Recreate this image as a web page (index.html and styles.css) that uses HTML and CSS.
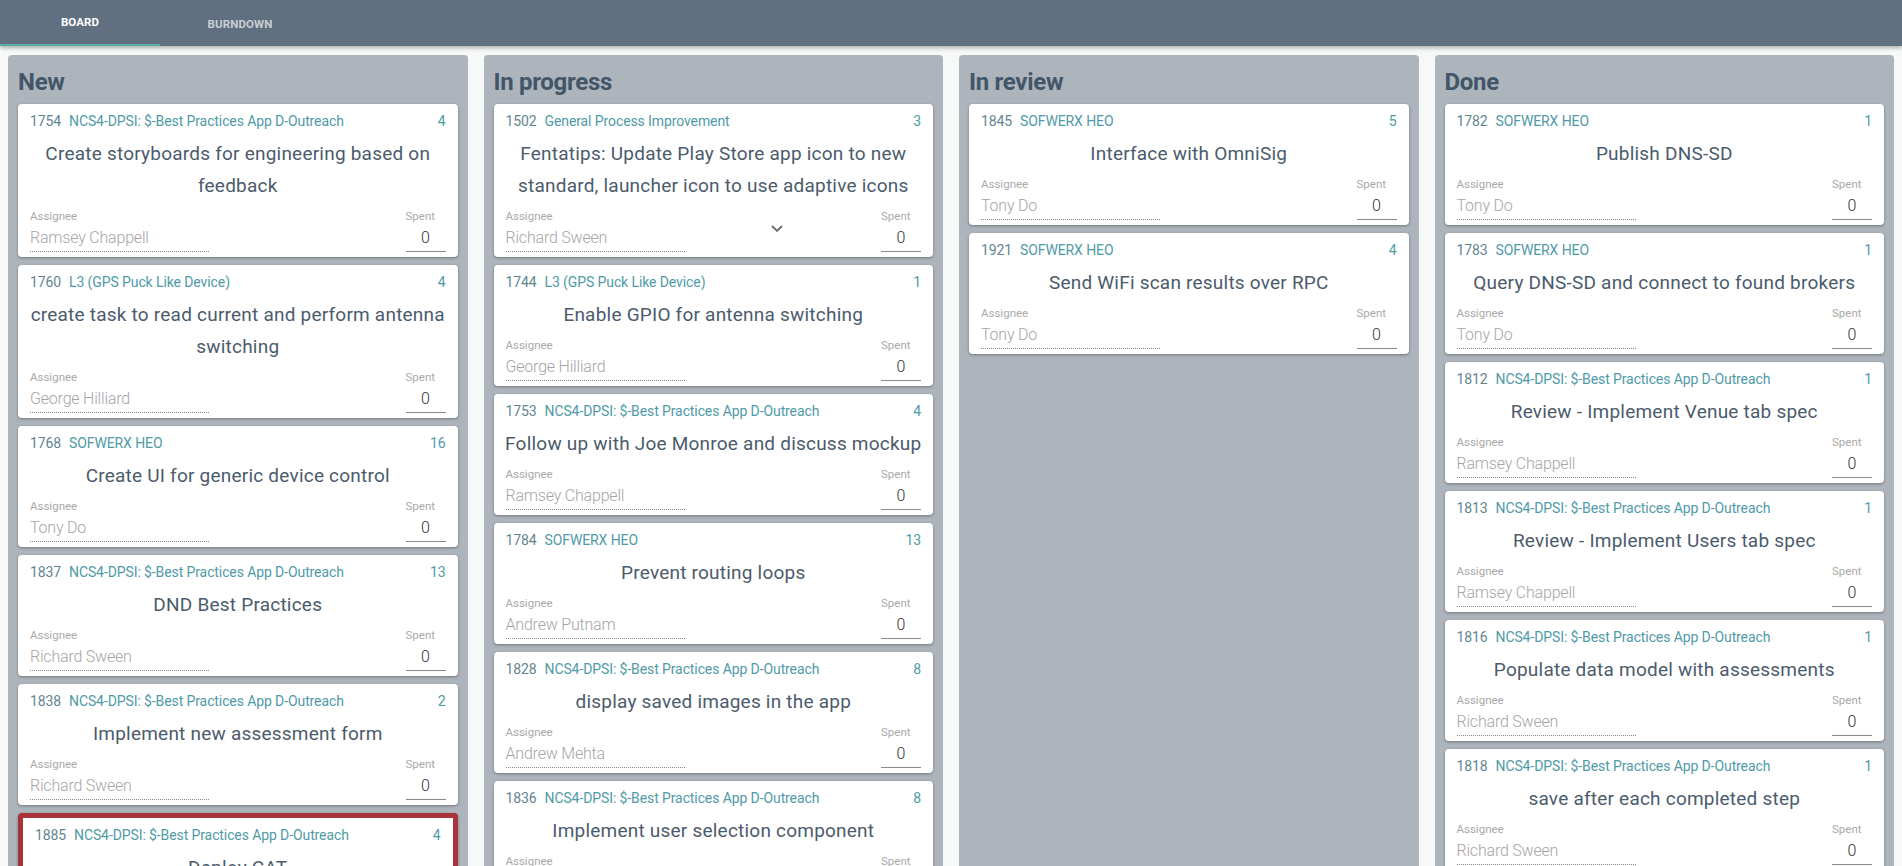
FILE: index.html
```html
<!DOCTYPE html>
<html>
<head>
<meta charset="utf-8">
<link rel="stylesheet" href="styles.css">
</head>
<body>
<header class="topbar">
  <div class="tab active">BOARD</div>
  <div class="tab">BURNDOWN</div>
</header>
<main class="board">
  <section class="column">
    <h2 class="col-title">New</h2>
    <div class="card">
      <div class="meta"><span class="id">1754</span><span class="proj">NCS4-DPSI: $-Best Practices App D-Outreach</span><span class="pts">4</span></div>
      <div class="title">Create storyboards for engineering based on feedback</div>
      <div class="foot"><div class="assignee"><div class="lbl">Assignee</div><div class="val">Ramsey Chappell</div></div><div class="spent"><div class="lbl">Spent</div><div class="val">0</div></div></div>
    </div>
    <div class="card">
      <div class="meta"><span class="id">1760</span><span class="proj">L3 (GPS Puck Like Device)</span><span class="pts">4</span></div>
      <div class="title">create task to read current and perform antenna switching</div>
      <div class="foot"><div class="assignee"><div class="lbl">Assignee</div><div class="val">George Hilliard</div></div><div class="spent"><div class="lbl">Spent</div><div class="val">0</div></div></div>
    </div>
    <div class="card">
      <div class="meta"><span class="id">1768</span><span class="proj">SOFWERX HEO</span><span class="pts">16</span></div>
      <div class="title">Create UI for generic device control</div>
      <div class="foot"><div class="assignee"><div class="lbl">Assignee</div><div class="val">Tony Do</div></div><div class="spent"><div class="lbl">Spent</div><div class="val">0</div></div></div>
    </div>
    <div class="card">
      <div class="meta"><span class="id">1837</span><span class="proj">NCS4-DPSI: $-Best Practices App D-Outreach</span><span class="pts">13</span></div>
      <div class="title">DND Best Practices</div>
      <div class="foot"><div class="assignee"><div class="lbl">Assignee</div><div class="val">Richard Sween</div></div><div class="spent"><div class="lbl">Spent</div><div class="val">0</div></div></div>
    </div>
    <div class="card">
      <div class="meta"><span class="id">1838</span><span class="proj">NCS4-DPSI: $-Best Practices App D-Outreach</span><span class="pts">2</span></div>
      <div class="title">Implement new assessment form</div>
      <div class="foot"><div class="assignee"><div class="lbl">Assignee</div><div class="val">Richard Sween</div></div><div class="spent"><div class="lbl">Spent</div><div class="val">0</div></div></div>
    </div>
    <div class="card flagged">
      <div class="meta"><span class="id">1885</span><span class="proj">NCS4-DPSI: $-Best Practices App D-Outreach</span><span class="pts">4</span></div>
      <div class="title">Deploy CAT</div>
      <div class="foot"><div class="assignee"><div class="lbl">Assignee</div><div class="val">Richard Sween</div></div><div class="spent"><div class="lbl">Spent</div><div class="val">0</div></div></div>
    </div>
  </section>

  <section class="column">
    <h2 class="col-title">In progress</h2>
    <div class="card">
      <div class="meta"><span class="id">1502</span><span class="proj">General Process Improvement</span><span class="pts">3</span></div>
      <div class="title">Fentatips: Update Play Store app icon to new standard, launcher icon to use adaptive icons</div>
      <div class="foot"><div class="assignee"><div class="lbl">Assignee</div><div class="val">Richard Sween</div></div>
        <svg class="chev" width="12" height="7" viewBox="0 0 12 7"><path d="M1 1 L6 5.8 L11 1" fill="none" stroke="#666" stroke-width="1.8"/></svg>
        <div class="spent"><div class="lbl">Spent</div><div class="val">0</div></div></div>
    </div>
    <div class="card">
      <div class="meta"><span class="id">1744</span><span class="proj">L3 (GPS Puck Like Device)</span><span class="pts">1</span></div>
      <div class="title">Enable GPIO for antenna switching</div>
      <div class="foot"><div class="assignee"><div class="lbl">Assignee</div><div class="val">George Hilliard</div></div><div class="spent"><div class="lbl">Spent</div><div class="val">0</div></div></div>
    </div>
    <div class="card">
      <div class="meta"><span class="id">1753</span><span class="proj">NCS4-DPSI: $-Best Practices App D-Outreach</span><span class="pts">4</span></div>
      <div class="title">Follow up with Joe Monroe and discuss mockup</div>
      <div class="foot"><div class="assignee"><div class="lbl">Assignee</div><div class="val">Ramsey Chappell</div></div><div class="spent"><div class="lbl">Spent</div><div class="val">0</div></div></div>
    </div>
    <div class="card">
      <div class="meta"><span class="id">1784</span><span class="proj">SOFWERX HEO</span><span class="pts">13</span></div>
      <div class="title">Prevent routing loops</div>
      <div class="foot"><div class="assignee"><div class="lbl">Assignee</div><div class="val">Andrew Putnam</div></div><div class="spent"><div class="lbl">Spent</div><div class="val">0</div></div></div>
    </div>
    <div class="card">
      <div class="meta"><span class="id">1828</span><span class="proj">NCS4-DPSI: $-Best Practices App D-Outreach</span><span class="pts">8</span></div>
      <div class="title">display saved images in the app</div>
      <div class="foot"><div class="assignee"><div class="lbl">Assignee</div><div class="val">Andrew Mehta</div></div><div class="spent"><div class="lbl">Spent</div><div class="val">0</div></div></div>
    </div>
    <div class="card">
      <div class="meta"><span class="id">1836</span><span class="proj">NCS4-DPSI: $-Best Practices App D-Outreach</span><span class="pts">8</span></div>
      <div class="title">Implement user selection component</div>
      <div class="foot"><div class="assignee"><div class="lbl">Assignee</div><div class="val">Andrew Mehta</div></div><div class="spent"><div class="lbl">Spent</div><div class="val">0</div></div></div>
    </div>
  </section>

  <section class="column">
    <h2 class="col-title">In review</h2>
    <div class="card">
      <div class="meta"><span class="id">1845</span><span class="proj">SOFWERX HEO</span><span class="pts">5</span></div>
      <div class="title">Interface with OmniSig</div>
      <div class="foot"><div class="assignee"><div class="lbl">Assignee</div><div class="val">Tony Do</div></div><div class="spent"><div class="lbl">Spent</div><div class="val">0</div></div></div>
    </div>
    <div class="card">
      <div class="meta"><span class="id">1921</span><span class="proj">SOFWERX HEO</span><span class="pts">4</span></div>
      <div class="title">Send WiFi scan results over RPC</div>
      <div class="foot"><div class="assignee"><div class="lbl">Assignee</div><div class="val">Tony Do</div></div><div class="spent"><div class="lbl">Spent</div><div class="val">0</div></div></div>
    </div>
  </section>

  <section class="column">
    <h2 class="col-title">Done</h2>
    <div class="card">
      <div class="meta"><span class="id">1782</span><span class="proj">SOFWERX HEO</span><span class="pts">1</span></div>
      <div class="title">Publish DNS-SD</div>
      <div class="foot"><div class="assignee"><div class="lbl">Assignee</div><div class="val">Tony Do</div></div><div class="spent"><div class="lbl">Spent</div><div class="val">0</div></div></div>
    </div>
    <div class="card">
      <div class="meta"><span class="id">1783</span><span class="proj">SOFWERX HEO</span><span class="pts">1</span></div>
      <div class="title">Query DNS-SD and connect to found brokers</div>
      <div class="foot"><div class="assignee"><div class="lbl">Assignee</div><div class="val">Tony Do</div></div><div class="spent"><div class="lbl">Spent</div><div class="val">0</div></div></div>
    </div>
    <div class="card">
      <div class="meta"><span class="id">1812</span><span class="proj">NCS4-DPSI: $-Best Practices App D-Outreach</span><span class="pts">1</span></div>
      <div class="title">Review - Implement Venue tab spec</div>
      <div class="foot"><div class="assignee"><div class="lbl">Assignee</div><div class="val">Ramsey Chappell</div></div><div class="spent"><div class="lbl">Spent</div><div class="val">0</div></div></div>
    </div>
    <div class="card">
      <div class="meta"><span class="id">1813</span><span class="proj">NCS4-DPSI: $-Best Practices App D-Outreach</span><span class="pts">1</span></div>
      <div class="title">Review - Implement Users tab spec</div>
      <div class="foot"><div class="assignee"><div class="lbl">Assignee</div><div class="val">Ramsey Chappell</div></div><div class="spent"><div class="lbl">Spent</div><div class="val">0</div></div></div>
    </div>
    <div class="card">
      <div class="meta"><span class="id">1816</span><span class="proj">NCS4-DPSI: $-Best Practices App D-Outreach</span><span class="pts">1</span></div>
      <div class="title">Populate data model with assessments</div>
      <div class="foot"><div class="assignee"><div class="lbl">Assignee</div><div class="val">Richard Sween</div></div><div class="spent"><div class="lbl">Spent</div><div class="val">0</div></div></div>
    </div>
    <div class="card">
      <div class="meta"><span class="id">1818</span><span class="proj">NCS4-DPSI: $-Best Practices App D-Outreach</span><span class="pts">1</span></div>
      <div class="title">save after each completed step</div>
      <div class="foot"><div class="assignee"><div class="lbl">Assignee</div><div class="val">Richard Sween</div></div><div class="spent"><div class="lbl">Spent</div><div class="val">0</div></div></div>
    </div>
  </section>
</main>
</body>
</html>
```

FILE: styles.css
```css
* { box-sizing: border-box; }
html, body { margin: 0; padding: 0; }
body {
  background: #f7f8f8;
  font-family: Roboto, "Liberation Sans", sans-serif;
  overflow: hidden;
  height: 866px;
}
.topbar {
  height: 46px;
  background: #607080;
  display: flex;
  box-shadow: 0 2px 4px rgba(0,0,0,0.3);
  position: relative;
  z-index: 2;
}
.tab {
  width: 160px;
  display: flex;
  align-items: center;
  justify-content: center;
  font-size: 11.5px;
  font-weight: 700;
  color: #c9cfd5;
  letter-spacing: 0.1px;
  padding-top: 2px;
}
.tab.active {
  color: #ffffff;
  border-bottom: 2px solid #5eaaa4;
  padding-top: 0;
}
.board {
  display: flex;
  gap: 16px;
  padding: 9px 8px 0;
  align-items: stretch;
}
.column {
  flex: 1 1 0;
  min-width: 0;
  background: #adb4bb;
  border-radius: 4px;
  padding: 0 10px 10px;
}
.col-title {
  margin: 0;
  padding: 13px 0 0 0;
  height: 49px;
  font-size: 24px;
  font-weight: 700;
  color: #435669;
  line-height: 28px;
  letter-spacing: -0.3px;
}
.card {
  background: #fff;
  border-radius: 4px;
  box-shadow: 0 1px 3px rgba(0,0,0,0.35);
  padding: 8px 12px 5px;
  margin-bottom: 8px;
}
.card.flagged {
  border: 5px solid #a8333a;
}
.meta {
  display: flex;
  align-items: center;
  height: 18px;
  font-size: 14px;
  letter-spacing: -0.1px;
}
.meta .id { color: #5f8590; width: 39px; }
.meta .proj { color: #4f9aa7; flex: 1; }
.meta .pts { color: #4f9aa7; }
.title {
  margin: 8px -6px 0;
  text-align: center;
  font-size: 19px;
  font-weight: 400;
  line-height: 32px;
  color: #4b5b6c;
  letter-spacing: 0.22px;
}
.foot {
  display: flex;
  align-items: flex-end;
  margin-top: 7px;
}
.lbl {
  font-size: 11.5px;
  line-height: 14px;
  color: #a9a9a9;
  letter-spacing: 0;
}
.assignee { width: 179px; }
.assignee .val {
  margin-top: 2px;
  font-size: 16px;
  font-weight: 300;
  line-height: 26px;
  color: #a8a3a7;
  letter-spacing: -0.2px;
  border-bottom: 1px dotted #8a8a8a;
  white-space: nowrap;
}
.chev { margin: 0 0 20px 86px; }
.spent { width: 40px; margin-left: auto; }
.spent .val {
  margin-top: 2px;
  font-size: 16px;
  font-weight: 300;
  line-height: 26px;
  color: #333;
  text-align: center;
  border-bottom: 1px solid #8a8a8a;
}
```
